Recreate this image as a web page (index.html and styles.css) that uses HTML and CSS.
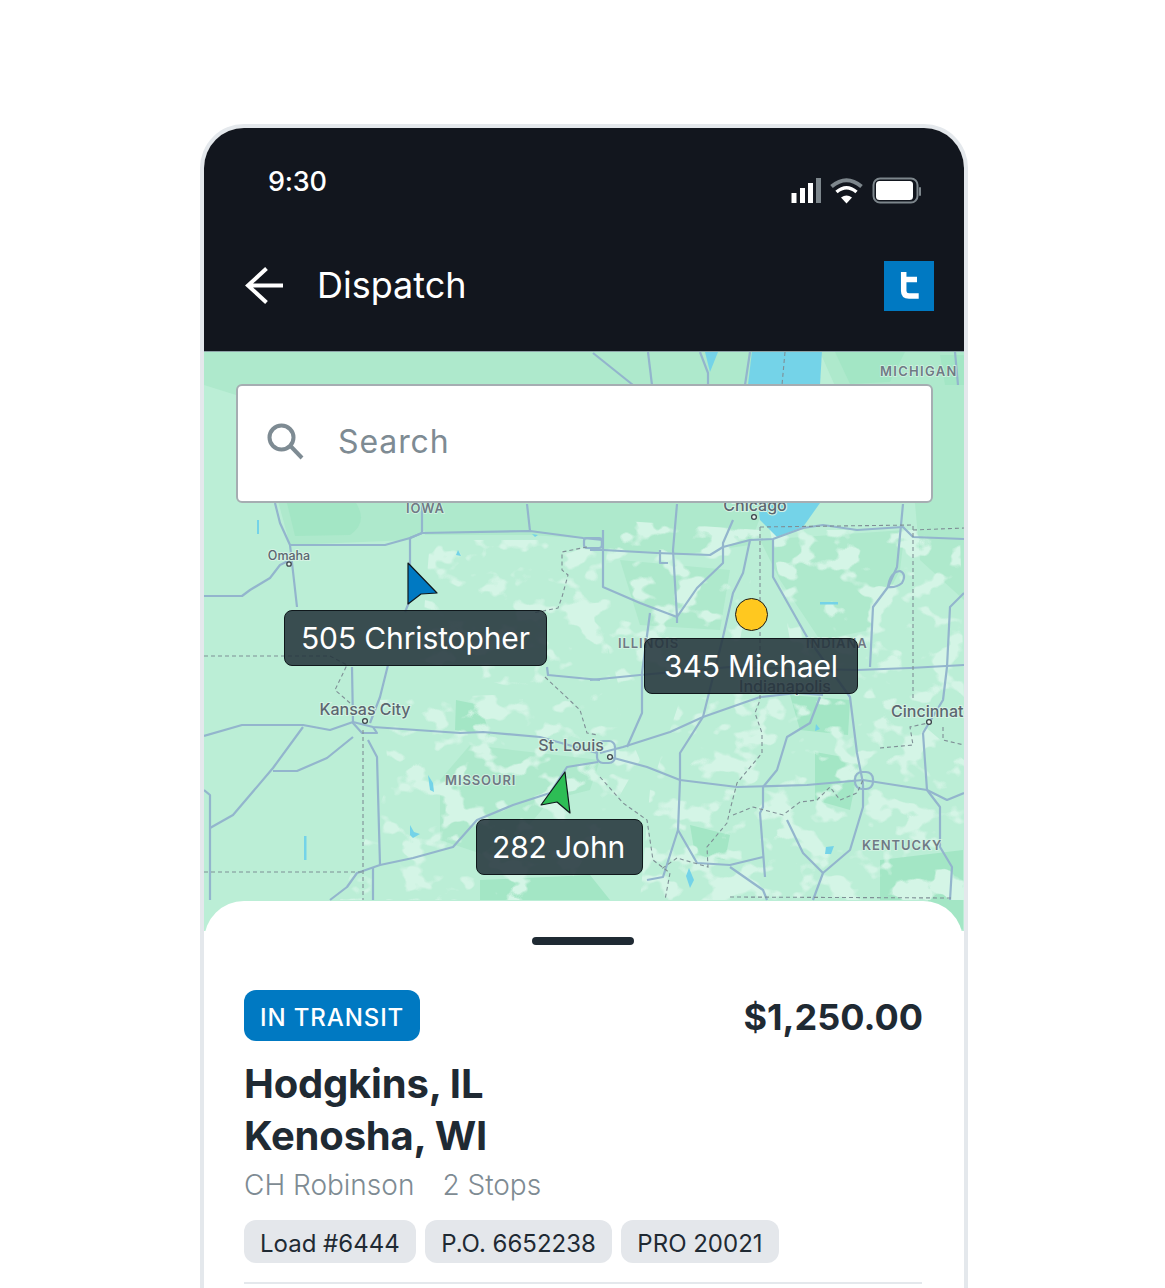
FILE: index.html
```html
<!DOCTYPE html>
<html lang="en">
<head>
<meta charset="utf-8">
<title>Dispatch</title>
<link rel="stylesheet" href="styles.css">
</head>
<body>
<main class="phone">
  <header class="top">
    <div class="status">
      <span class="clock">9:30</span>
      <svg class="status-icons" viewBox="790 176 133 29" width="133" height="29" aria-hidden="true">
        <rect class="w" x="791.5" y="193" width="5" height="10"/>
        <rect class="w" x="800" y="188" width="5" height="15"/>
        <rect class="w" x="808" y="183" width="5" height="20"/>
        <rect class="g" x="816" y="178" width="5" height="25"/>
        <path class="arc-g" d="M831.5 186.5 Q846.5 174 861.500 186.500"/>
        <path class="arc-w" d="M836.500 192 Q846.500 183.500 856.500 192"/>
        <path class="w" d="M846.500 203.500 L841 197.500 Q846.500 193.500 852 197.500 Z"/>
        <rect class="batt" x="873.500" y="178.500" width="44" height="24" rx="6.500"/>
        <rect class="w" x="876" y="181" width="37" height="19" rx="3.500"/>
        <rect class="g" x="919" y="187" width="2" height="9" rx="1"/>
      </svg>
    </div>
    <div class="appbar">
      <svg class="back" viewBox="244 266 41 40" width="41" height="40" aria-hidden="true">
        <path d="M283 285.500 H248 M266.500 268.500 L248 285.500 L266.500 302.500"/>
      </svg>
      <h1 class="title">Dispatch</h1>
      <svg class="logo" viewBox="884 261 50 50" width="50" height="50" aria-hidden="true">
        <rect x="884" y="261" width="50" height="50"/>
        <path d="M903.700 272 V291 Q903.700 296 909 296 H918.700 M903.700 279.500 H917"/>
      </svg>
    </div>
  </header>

  <section class="map">
    <svg class="map-art" viewBox="204 351 760 580" width="760" height="580" aria-hidden="true">
      <defs>
        <filter id="mottle" x="0" y="0" width="100%" height="100%">
          <feTurbulence type="fractalNoise" baseFrequency="0.03 0.04" numOctaves="3" seed="7"/>
          <feColorMatrix type="matrix" values="0 0 0 0 0.66  0 0 0 0 0.91  0 0 0 0 0.79  14 0 0 0 -7.600"/>
        </filter>
        <clipPath id="mottled">
          <path d="M380 700 L610 690 L640 760 L560 900 L340 900 L390 780 Z"/>
          <path d="M430 540 L600 540 L610 680 L520 690 L420 660 Z"/>
          <path d="M610 520 L760 530 L740 640 L620 690 L600 620 Z"/>
          <path d="M770 530 L960 530 L964 700 L860 720 L790 640 Z"/>
          <path d="M680 700 L870 680 L964 760 L964 900 L640 900 L650 790 Z"/>
        </clipPath>
      </defs>
      <rect class="m-base" x="204" y="351" width="760" height="580"/>
      <g class="m-mid">
        <path d="M204 351 H760 V420 H236 V395 L204 385 Z"/>
        <path d="M275 490 H420 L425 530 L410 540 L290 545 Z"/>
        <path d="M420 490 H600 L610 540 L530 535 L425 535 Z"/>
        <path d="M600 490 H770 L750 545 L680 555 L600 550 Z"/>
        <path d="M760 540 L905 530 L900 570 L870 630 L820 640 L780 580 Z"/>
        <path d="M820 352 H964 V420 H850 Z"/>
        <path d="M905 390 H964 V600 L920 560 Z"/>
        <path d="M620 560 L730 570 L720 630 L640 625 Z"/>
        <path d="M470 745 L600 760 L590 790 L550 800 L500 860 L440 840 L440 780 Z"/>
      </g>
      <g class="m-dark">
        <path d="M835 352 H905 L890 382 L850 384 Z"/>
        <path d="M285 495 L350 495 Q372 520 350 535 L295 536 Z"/>
        <path d="M790 695 L850 700 L848 735 L800 730 Z"/>
        <path d="M815 752 L860 760 L850 810 L815 800 Z"/>
        <path d="M480 880 L590 875 L610 900 L480 900 Z"/>
        <path d="M690 825 L730 835 L725 860 L695 855 Z"/>
        <path d="M880 860 L963 850 L963 900 L880 900 Z"/>
        <path d="M915 870 L963 875 L963 930 L930 905 Z"/>
        <path d="M456 700 L480 705 L490 735 L455 730 Z"/>
        <path d="M940 355 H964 V385 H945 Z"/>
      </g>
      <g clip-path="url(#mottled)">
        <rect x="204" y="351" width="760" height="580" filter="url(#mottle)"/>
      </g>
      <g class="m-water">
        <path d="M752 351 H822 L820 385 H748 Z"/>
        <path d="M758 503 L760 520 L777 537 L803 527 L820 503 Z"/>
        <path d="M705 352 H718 L710 372 Z"/>
        <rect x="257" y="520" width="2" height="14"/>
        <rect x="304" y="836" width="2.500" height="24"/>
        <path d="M428 775 L433 783 L434 792 L430 790 Z"/>
        <path d="M820 602 H838 V604.500 H820 Z"/>
        <path d="M689 868 L694 880 L690 888 L686 876 Z"/>
        <path d="M826 847 L834 846 L831 854 L825 854 Z"/>
        <path d="M532 534 L538 535 L535 537 Z"/>
        <path d="M816 724 L820 729 L815 731 Z"/>
        <path d="M458 550 L461 556 L456 555 Z"/>
        <path d="M410 825 L414 832 L420 834 L413 838 L410 835 Z"/>
      </g>
      <g class="m-road">
        <path d="M275 503 L280 523 L290 545 L297 607"/>
        <path d="M290 545 L385 545 L410 538 L422 533 L530 531 L583 538 L603 540"/>
        <path d="M204 596 L242 596 L250 590 L270 578 L280 565 L290 560"/>
        <path d="M422 503 V533 L410 538 V600 L405 612"/>
        <path d="M388 665 L380 697 L370 723"/>
        <path d="M352 667 L353 723 L362 733 L377 733 L373 727"/>
        <path d="M527 504 L530 531"/>
        <path d="M204 736 L242 725 L303 725 L330 730 L353 722 L373 727 L460 733 L483 732 L540 737 L597 753"/>
        <path d="M303 727 L273 768 L233 815 L210 828"/>
        <path d="M273 771 L297 771 L327 758 L353 737"/>
        <path d="M368 740 L377 757 L380 865"/>
        <path d="M330 900 L347 887 L357 873 L380 865 L413 858 L453 847 L477 820 L513 805 L550 793 L567 767 L598 762"/>
        <path d="M204 790 L210 795 V900"/>
        <path d="M373 867 V900"/>
        <path d="M547 667 L548 675 L600 680"/>
        <path d="M590 550 L603 550 L657 553 L710 555 L723 547 L750 540 L773 539 L803 528 L823 525 L857 530 L903 527 L913 537 L964 539"/>
        <path d="M603 530 V587 L640 603 L677 617 V623"/>
        <path d="M677 504 L673 550 L677 617 L697 588 L723 563 V543 L733 520"/>
        <path d="M750 540 L743 573 L733 593 L723 637 L703 717 L680 753 V780 L678 830 L663 877 L647 880"/>
        <path d="M773 539 V577 L790 607 L807 637 L850 697 L857 753 L863 783 V807 L850 850 L823 873 L813 900"/>
        <path d="M590 680 L640 675 L730 667 L857 670 L910 668 L964 665"/>
        <path d="M600 753 L623 747 L670 732 L703 717 L760 697 L797 693 L823 695"/>
        <path d="M610 757 L647 767 L680 780 L737 787 L807 785 L863 780 L927 790 L947 800 L964 793"/>
        <path d="M820 697 L810 723 L787 737 L777 770 L763 787 V807 L760 813 L765 877"/>
        <path d="M787 820 L803 853 L823 873"/>
        <path d="M678 830 L697 863 L730 865 L763 857"/>
        <path d="M730 867 L763 890 L767 900"/>
        <path d="M923 733 L927 790 L940 807 V847 L952 867 L950 900"/>
        <path d="M903 504 L897 567 L888 587 L873 607 L870 667"/>
        <path d="M964 593 L950 607 L947 667 L943 700 L923 733"/>
        <path d="M650 613 L642 673 V713 L627 747"/>
        <path d="M648 352 L652 385"/>
        <path d="M700 352 L708 373 V385"/>
        <path d="M593 353 L633 385"/>
        <path d="M750 352 L745 385"/>
        <path d="M955 352 L958 385"/>
        <path d="M888 587 Q890 572 900 571 Q907 574 902 583 Q896 588 888 587 Z"/>
        <path d="M660 550 V563 H668"/>
        <rect x="597" y="741" width="18" height="22" rx="6"/>
        <rect x="855" y="772" width="18" height="17" rx="7"/>
        <rect x="584" y="538" width="18" height="10" rx="3"/>
      </g>
      <g class="m-dash">
        <path d="M204 656 H330 L347 665 L335 690 L350 703"/>
        <path d="M363 730 V900"/>
        <path d="M204 872 H363"/>
        <path d="M587 547 L562 552 L562 570 L568 575 L562 597 L558 608 L533 613"/>
        <path d="M545 677 L580 710 L587 733 L598 735"/>
        <path d="M760 527 L913 525 V700"/>
        <path d="M913 530 L964 528"/>
        <path d="M760 527 V700 L755 713 L762 733 V753 L737 783 L730 810 L727 823 L707 847 L708 867 L677 858 L660 870"/>
        <path d="M733 815 L753 807 L783 815 L800 802 L817 800 L830 787 L840 800 L857 793 L863 780"/>
        <path d="M880 748 L913 745 L910 727 L928 723"/>
        <path d="M943 727 V740 L964 745"/>
        <path d="M600 777 L623 803 L647 820 L653 860 L670 873 L665 900"/>
        <path d="M730 897 L953 898"/>
        <path d="M785 352 L782 385"/>
      </g>
      <g class="m-dots">
        <circle cx="289" cy="564" r="2.200"/>
        <circle cx="365" cy="721" r="2.400"/>
        <circle cx="610" cy="757" r="2.400"/>
        <circle cx="754" cy="517" r="2.400"/>
        <circle cx="929" cy="722" r="2.400"/>
      </g>
      <g class="m-city">
        <text x="289" y="560" text-anchor="middle" font-size="12.500">Omaha</text>
        <text x="365" y="715" text-anchor="middle" font-size="16">Kansas City</text>
        <text x="571" y="751" text-anchor="middle" font-size="16">St. Louis</text>
        <text x="755" y="511" text-anchor="middle" font-size="16">Chicago</text>
        <text x="891" y="717" font-size="16">Cincinnat</text>
        <text x="785" y="692" text-anchor="middle" font-size="16">Indianapolis</text>
      </g>
      <g class="m-state">
        <text x="880" y="376">MICHIGAN</text>
        <text class="st-tight" x="406" y="513">IOWA</text>
        <text class="st-tight" x="445" y="785">MISSOURI</text>
        <text class="st-tight" x="618" y="648">ILLINOIS</text>
        <text class="st-tight" x="806" y="648">INDIANA</text>
        <text class="st-tight" x="862" y="850">KENTUCKY</text>
      </g>
    </svg>

    <form class="search">
      <svg class="search-icon" viewBox="0 0 40 40" width="40" height="40" aria-hidden="true">
        <circle cx="16.500" cy="15.500" r="12"/>
        <path d="M25.500 24 L37 36"/>
      </svg>
      <span class="search-text">Search</span>
    </form>

    <svg class="pin pin-blue" viewBox="0 0 31 43" width="31" height="43" aria-hidden="true"><path d="M1 1 L30 31 L14 32 L1 42 Z"/></svg>
    <svg class="pin pin-green" viewBox="0 0 31 43" width="31" height="43" aria-hidden="true"><path d="M25 1 L30 42 L17 31 L1 34 Z"/></svg>
    <span class="pin-dot"></span>

    <span class="tag-label label-a">505 Christopher</span>
    <span class="tag-label label-b">345 Michael</span>
    <span class="tag-label label-c">282 John</span>
  </section>

  <section class="sheet">
    <div class="handle"></div>
    <div class="row">
      <span class="state">IN TRANSIT</span>
      <span class="price">$1,250.00</span>
    </div>
    <h2 class="route">Hodgkins, IL<br>Kenosha, WI</h2>
    <p class="meta"><span>CH Robinson</span><span>2 Stops</span></p>
    <ul class="chips">
      <li class="chip">Load #6444</li>
      <li class="chip">P.O. 6652238</li>
      <li class="chip">PRO 20021</li>
    </ul>
    <hr class="rule">
  </section>
</main>
</body>
</html>
```
FILE: styles.css
```css
* { box-sizing: border-box; }
html, body { margin: 0; height: 1288px; overflow: hidden; background: #fff; }
body { padding: 124px 0 0 200px; font-family: Inter, "Liberation Sans", sans-serif; }

.phone {
  width: 768px;
  height: 1200px;
  border: 4px solid #e4e8ec;
  border-bottom: 0;
  border-radius: 44px 44px 0 0;
  overflow: hidden;
  background: #fff;
}

.top { height: 223px; background: #12161e; color: #fff; }
.status { height: 105px; display: flex; align-items: flex-start; justify-content: space-between; padding: 36px 41px 0 64px; }
.clock { font-size: 27px; font-weight: 500; line-height: 36px; letter-spacing: -.2px; }
.status-icons { margin-top: 12px; }
.status-icons .w { fill: #fff; }
.status-icons .g { fill: #7d868c; }
.arc-g { fill: none; stroke: #7d868c; stroke-width: 4; }
.arc-w { fill: none; stroke: #fff; stroke-width: 3.5; }
.batt { fill: none; stroke: #7d868c; stroke-width: 2; }

.appbar { display: flex; align-items: center; padding: 0 30px 0 40px; height: 100px; margin-top: 3px; }
.back { flex: none; }
.back path { fill: none; stroke: #fff; stroke-width: 4; }
.title { margin: -2px 0 0 32px; flex: 1; font-size: 36px; font-weight: 400; line-height: 44px; letter-spacing: 0; }
.logo rect { fill: #0079c2; }
.logo path { fill: none; stroke: #fff; stroke-width: 5.5; }

.map { position: relative; height: 580px; padding: 32px 32px 0 32px; overflow: hidden; border-top: 1px solid #8ea3a8; }
.map-art { position: absolute; left: 0; top: -1px; }
.m-base { fill: #bbeed6; }
.m-mid path { fill: #aee9cc; }
.m-dark path { fill: #a3e6c5; }
.m-water path, .m-water rect { fill: #74d3e8; }
.m-road path, .m-road rect { fill: none; stroke: #93b5cd; stroke-width: 2.200; stroke-linejoin: round; }
.m-dash path { fill: none; stroke: #7f8f96; stroke-width: 1.100; stroke-dasharray: 4 3; }
.m-dots circle { fill: #e8f6ee; stroke: #3c444a; stroke-width: 1.300; }
.m-city text { fill: #5c6670; font-weight: 500; paint-order: stroke; stroke: #d5f3e4; stroke-width: 2px; }
.m-state text { fill: #6f7a84; font-size: 13px; font-weight: 600; letter-spacing: 1.300px; paint-order: stroke; stroke: #d5f3e4; stroke-width: 1.500px; }
.m-state .st-tight { letter-spacing: .9px; }

.search {
  position: relative;
  display: flex;
  align-items: center;
  height: 119px;
  width: 697px;
  padding: 0 0 3px 27px;
  background: #fff;
  border: 2px solid #a6adb2;
  border-radius: 6px;
}
.search-icon circle, .search-icon path { fill: none; stroke: #7e8b93; stroke-width: 4; }
.search-text { margin-left: 33px; font-size: 32px; line-height: 40px; color: #7e8b93; letter-spacing: .9px; }

.pin { position: absolute; }
.pin path { stroke: #10181c; stroke-width: 1.200; stroke-linejoin: round; }
.pin-blue { left: 203px; top: 210px; }
.pin-blue path { fill: #0079c2; }
.pin-green { left: 336px; top: 419px; }
.pin-green path { fill: #2dbd55; }
.pin-dot { position: absolute; left: 531px; top: 246px; width: 33px; height: 33px; border-radius: 50%; background: #ffc81f; border: 1.200px solid #1a1a1a; }

.tag-label {
  position: absolute;
  height: 56px;
  padding: 0 16px;
  display: flex;
  align-items: center;
  font-size: 30px;
  line-height: 40px;
  letter-spacing: -.13px;
  color: #fff;
  background: rgba(35, 50, 58, .86);
  border: 1px solid #10181c;
  border-radius: 8px;
  white-space: nowrap;
}
.label-a { left: 80px; top: 258px; }
.label-b { left: 440px; top: 286px; padding: 0 19px; }
.label-c { left: 272px; top: 467px; padding: 0 17px 0 15px; }

.sheet { position: relative; margin-top: -30px; height: 460px; width: 759px; padding: 36px 41px 0 40px; background: #fff; border-radius: 40px 40px 0 0; }
.handle { width: 102px; height: 8px; margin: 0 auto; border-radius: 4px; background: #1f2a33; }
.row { display: flex; align-items: center; justify-content: space-between; margin-top: 45px; }
.state { display: block; height: 51px; padding: 0 16px; line-height: 55px; font-size: 24px; font-weight: 500; letter-spacing: .9px; color: #fff; background: #0079c2; border-radius: 12px; }
.price { padding-top: 2px; margin-right: -1px; font-size: 36px; font-weight: 700; line-height: 46px; color: #1f2a33; }
.route { margin: 17px 0 0; font-size: 40px; font-weight: 700; line-height: 52px; letter-spacing: -.2px; color: #1f2a33; }
.meta { display: flex; gap: 28px; margin: 3px 0 0; font-size: 28px; line-height: 40px; color: #7e8b93; font-weight: 300; }
.chips { display: flex; gap: 9.5px; margin: 15px 0 0; padding: 0; list-style: none; }
.chip { height: 43px; padding: 0 16px; font-size: 24px; line-height: 47px; background: #e4e7eb; color: #1f2a33; border-radius: 12px; }
.rule { margin: 19px 0 0; height: 2px; border: 0; background: #e4e8ec; }
```
